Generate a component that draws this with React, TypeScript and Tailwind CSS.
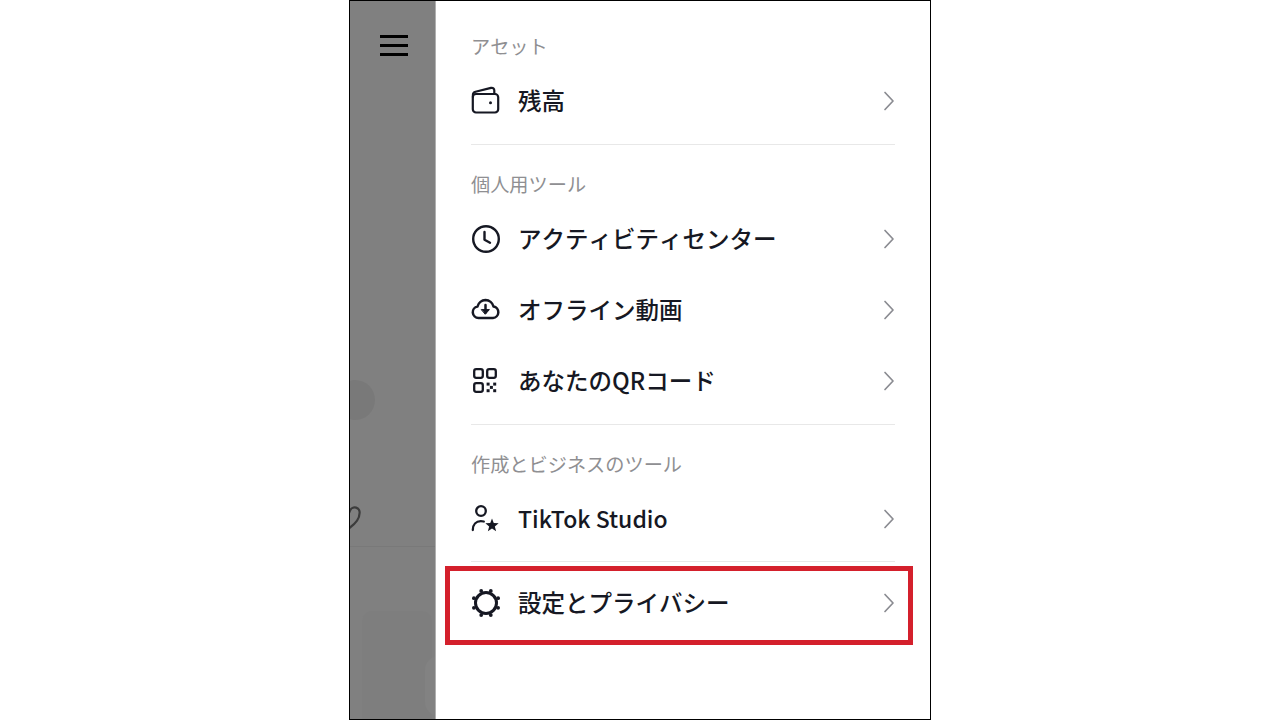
const jp = "font-['Noto_Sans_CJK_JP','Noto_Sans',sans-serif] [font-kerning:none]";

function WalletIcon() {
  return (
    <svg width="30" height="30" viewBox="0 0 30 30" fill="none" stroke="#161823" strokeWidth="2.2" strokeLinecap="round" strokeLinejoin="round">
      <rect x="1.8" y="8" width="25.4" height="18.5" rx="3.2" />
      <path d="M1.9 11V9c0-1.7 1-2.9 2.6-3.3L20 1.9c2-.4 3.3.8 3.3 2.5V8" />
      <circle cx="19.5" cy="16.8" r="1.5" fill="#161823" stroke="none" />
    </svg>
  );
}

function ClockIcon() {
  return (
    <svg width="30" height="30" viewBox="0 0 30 30" fill="none" stroke="#161823" strokeWidth="2.4" strokeLinecap="round" strokeLinejoin="round">
      <circle cx="15" cy="15" r="12.8" />
      <path d="M13.5 8v7.8l5.5 3" />
    </svg>
  );
}

function CloudIcon() {
  return (
    <svg width="30" height="30" viewBox="0 0 30 30" fill="none" stroke="#161823" strokeWidth="2.5" strokeLinecap="round" strokeLinejoin="round">
      <path d="M7.5 23a5.8 5.8 0 0 1-1-11.500A8.500 8.500 0 0 1 14.500 5a8.500 8.500 0 0 1 8 6.500 5.800 5.800 0 0 1-.5 11.500Z" />
      <path d="M14.500 10v7.500" />
      <path d="M10.600 14.600h7.800L14.500 19Z" fill="#161823" strokeWidth="1" />
    </svg>
  );
}

function QrIcon() {
  return (
    <svg width="30" height="30" viewBox="0 0 30 30" fill="none" stroke="#161823" strokeWidth="2.3">
      <rect x="3.200" y="3.200" width="8.600" height="8.600" rx="2" />
      <rect x="16.200" y="3.200" width="8.600" height="8.600" rx="2" />
      <rect x="3.200" y="17.200" width="8.600" height="8.600" rx="2" />
      <g fill="#161823" stroke="none">
        <rect x="15.600" y="16.600" width="3" height="3" />
        <rect x="22.200" y="16.600" width="3" height="3" />
        <rect x="18.900" y="19.900" width="3" height="3" />
        <rect x="15.600" y="23.200" width="3" height="3" />
        <rect x="22.200" y="23.200" width="3" height="3" />
      </g>
    </svg>
  );
}

function StudioIcon() {
  return (
    <svg width="30" height="30" viewBox="0 0 30 30" fill="none" stroke="#161823" strokeWidth="2.3" strokeLinecap="round">
      <circle cx="10" cy="7" r="4.800" />
      <path d="M1.800 26c0-5.500 3.400-8.800 8-8.900 1 0 2 .1 3 .4" />
      <path d="M21 14.500 22.760 19.070 27.660 19.340 23.850 22.430 25.110 27.160 21 24.500 16.890 27.160 18.150 22.430 14.340 19.340 19.240 19.070Z" fill="#161823" stroke="none" />
    </svg>
  );
}

function GearIcon() {
  return (
    <svg width="30" height="30" viewBox="0 0 30 30" fill="none" stroke="#161823" strokeWidth="3">
      <circle cx="15" cy="15" r="10.500" />
      <g fill="#161823" stroke="none">
        <circle cx="19.800" cy="2.900" r="1.900" />
        <circle cx="27.100" cy="10.200" r="1.900" />
        <circle cx="27.100" cy="19.800" r="1.900" />
        <circle cx="19.800" cy="27.100" r="1.900" />
        <circle cx="10.200" cy="27.100" r="1.900" />
        <circle cx="2.900" cy="19.800" r="1.900" />
        <circle cx="2.900" cy="10.200" r="1.900" />
        <circle cx="10.200" cy="2.900" r="1.900" />
      </g>
    </svg>
  );
}

function Chevron() {
  return (
    <svg width="12" height="20" viewBox="0 0 12 20" fill="none" stroke="#8a8b91" strokeWidth="1.700" strokeLinecap="round" strokeLinejoin="round">
      <path d="M2 1.500 10 10 2 18.500" />
    </svg>
  );
}

function Label({ children }: { children: React.ReactNode }) {
  return <div className="h-[39px] pt-[2px] flex items-center text-[19.2px] text-[#8f8f92] leading-none">{children}</div>;
}

function Row({ icon, text, short, latin }: { icon: React.ReactNode; text: string; short?: boolean; latin?: boolean }) {
  return (
    <div className={`flex items-center ${short ? "h-[64px]" : "h-[71px]"}`}>
      <div className="w-[48px] shrink-0 flex items-center">{icon}</div>
      <div className={`flex-1 -ml-px font-medium text-[#161823] leading-none ${latin ? "text-[23px] [font-kerning:normal]" : "text-[23.5px]"}`}>{text}</div>
      <Chevron />
    </div>
  );
}

function Divider() {
  return <div className="h-px bg-[#e8e8e8]" />;
}

export default function App() {
  return (
    <div className={`w-[1280px] h-[720px] bg-white flex justify-center overflow-hidden ${jp}`}>
      <div className="w-[582px] h-[720px] border border-black flex">
        {/* dimmed page behind the drawer */}
        <div className="relative w-[86px] shrink-0 bg-[#808080] overflow-hidden border-r border-r-[#b0b0b0]">
          <div className="flex flex-col gap-[6px] w-[28px] ml-[30px] mt-[34px]">
            <div className="h-[3px] bg-black" />
            <div className="h-[3px] bg-black" />
            <div className="h-[3px] bg-black" />
          </div>
          <div className="absolute -left-[15px] top-[379px] w-[40px] h-[40px] rounded-full bg-[#797979]" />
          <svg className="absolute -left-[11px] top-[503px]" width="22" height="25" viewBox="0 0 22 25" fill="none" stroke="#3c3c3c" strokeWidth="2.200">
            <path d="M11 23.500C5 19 1.500 15 1.500 9.500a5 5 0 0 1 9.500-3 5 5 0 0 1 9.500 3c0 5.500-3.500 9.500-9.500 14Z" />
          </svg>
          <div className="absolute left-0 right-0 top-[545px] h-px bg-[#797979]" />
          <div className="absolute left-[12px] top-[610px] w-[70px] h-[120px] rounded-[10px] bg-[#7e7e7e]" />
          <div className="absolute left-[75px] top-[655px] w-[20px] h-[60px] rounded-l-[14px] bg-[#828282]" />
        </div>

        {/* drawer */}
        <div className="flex-1 bg-white pl-[35px] pr-[35px] pt-[25px]">
          <Label>アセット</Label>
          <Row icon={<WalletIcon />} text="残高" />
          <div className="mt-[8px]"><Divider /></div>

          <div className="pt-[19px]"><Label>個人用ツール</Label></div>
          <Row icon={<ClockIcon />} text="アクティビティセンター" />
          <Row icon={<CloudIcon />} text="オフライン動画" />
          <Row icon={<QrIcon />} text="あなたのQRコード" />
          <div className="mt-[8px]"><Divider /></div>

          <div className="pt-[19px]"><Label>作成とビジネスのツール</Label></div>
          <Row icon={<StudioIcon />} text="TikTok Studio" latin />
          <div className="mt-[7px]"><Divider /></div>

          {/* highlighted row */}
          <div className="mt-[4px] -ml-[26px] -mr-[18px] h-[79px] border-[5px] border-[#d4202c] pl-[21px] pr-[13px]">
            <Row icon={<GearIcon />} text="設定とプライバシー" short />
          </div>
        </div>
      </div>
    </div>
  );
}
